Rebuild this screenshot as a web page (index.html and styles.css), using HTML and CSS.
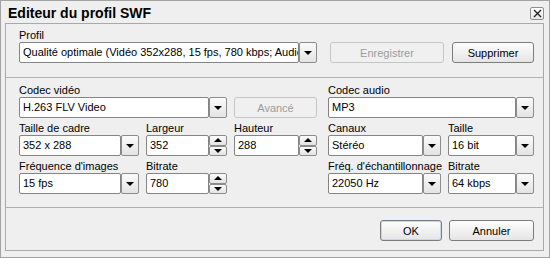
FILE: index.html
```html
<!DOCTYPE html>
<html lang="fr">
<head>
<meta charset="utf-8">
<title>Editeur du profil SWF</title>
<link rel="stylesheet" href="styles.css">
</head>
<body>
<div class="dialog">
  <div class="titlebar">
    <span class="title">Editeur du profil SWF</span>
    <span class="close"><svg width="9" height="9" viewBox="0 0 9 9"><path d="M1 1 L8 8 M8 1 L1 8" stroke="#222" stroke-width="1.4" fill="none"/></svg></span>
  </div>
  <div class="frame">
    <section class="sec sec-profile">
      <div class="field profile-field">
        <div class="lbl">Profil</div>
        <div class="combo">
          <div class="box">Qualité optimale (Vidéo 352x288, 15 fps, 780 kbps; Audio</div>
          <div class="dd"><span class="arrow-down"></span></div>
        </div>
      </div>
      <div class="btn btn-disabled btn-save">Enregistrer</div>
      <div class="btn btn-del">Supprimer</div>
    </section>

    <section class="sec sec-codec">
      <div class="grid grid-left">
        <div class="field span2">
          <div class="lbl">Codec vidéo</div>
          <div class="combo"><div class="box">H.263 FLV Video</div><div class="dd"><span class="arrow-down"></span></div></div>
        </div>
        <div class="field">
          <div class="lbl">&nbsp;</div>
          <div class="btn btn-disabled">Avancé</div>
        </div>
        <div class="field">
          <div class="lbl">Taille de cadre</div>
          <div class="combo"><div class="box">352 x 288</div><div class="dd"><span class="arrow-down"></span></div></div>
        </div>
        <div class="field">
          <div class="lbl">Largeur</div>
          <div class="combo"><div class="box">352</div><div class="spin"><div class="sb"><span class="arrow-up"></span></div><div class="sb"><span class="arrow-down"></span></div></div></div>
        </div>
        <div class="field">
          <div class="lbl">Hauteur</div>
          <div class="combo"><div class="box">288</div><div class="spin"><div class="sb"><span class="arrow-up"></span></div><div class="sb"><span class="arrow-down"></span></div></div></div>
        </div>
        <div class="field">
          <div class="lbl">Fréquence d'images</div>
          <div class="combo"><div class="box">15 fps</div><div class="dd"><span class="arrow-down"></span></div></div>
        </div>
        <div class="field">
          <div class="lbl">Bitrate</div>
          <div class="combo"><div class="box">780</div><div class="spin"><div class="sb"><span class="arrow-up"></span></div><div class="sb"><span class="arrow-down"></span></div></div></div>
        </div>
      </div>

      <div class="grid grid-right">
        <div class="field span2">
          <div class="lbl">Codec audio</div>
          <div class="combo"><div class="box">MP3</div><div class="dd"><span class="arrow-down"></span></div></div>
        </div>
        <div class="field">
          <div class="lbl">Canaux</div>
          <div class="combo"><div class="box">Stéréo</div><div class="dd"><span class="arrow-down"></span></div></div>
        </div>
        <div class="field">
          <div class="lbl">Taille</div>
          <div class="combo"><div class="box">16 bit</div><div class="dd"><span class="arrow-down"></span></div></div>
        </div>
        <div class="field">
          <div class="lbl">Fréq. d'échantillonnage</div>
          <div class="combo"><div class="box">22050 Hz</div><div class="dd"><span class="arrow-down"></span></div></div>
        </div>
        <div class="field">
          <div class="lbl">Bitrate</div>
          <div class="combo"><div class="box">64 kbps</div><div class="dd"><span class="arrow-down"></span></div></div>
        </div>
      </div>
    </section>

    <section class="sec sec-actions">
      <div class="btn btn-ok">OK</div>
      <div class="btn btn-cancel">Annuler</div>
    </section>
  </div>
</div>
</body>
</html>
```

FILE: styles.css
```css
* { box-sizing: border-box; }
html, body { margin: 0; padding: 0; background: #efefef; }
body {
  font-family: "Liberation Sans", Arial, sans-serif;
  font-size: 11px;
  color: #000;
}
.dialog {
  width: 550px;
  height: 258px;
  border: 1px solid #a3a3a3;
  background: #efefef;
  padding: 0 5px 6px 4px;
  display: flex;
  flex-direction: column;
}
.titlebar {
  height: 22px;
  flex: none;
  display: flex;
  align-items: center;
  justify-content: space-between;
  padding: 0 0 0 3px;
}
.title {
  font-weight: bold;
  font-size: 14px;
  margin-top: 1px;
}
.close {
  width: 14px;
  height: 13px;
  border: 1px solid #8e8e8e;
  border-radius: 2px;
  background: linear-gradient(#fdfdfd, #e6e6e6);
  display: flex;
  align-items: center;
  justify-content: center;
  margin-top: 3px;
}
.frame {
  flex: 1;
  border: 1px solid #a9a9a9;
  display: flex;
  flex-direction: column;
}
.sec {
  padding-left: 13px;
  padding-right: 9px;
}
.sec-profile {
  height: 54px;
  border-bottom: 1px solid #b1b1b1;
  padding-top: 5px;
  display: flex;
  align-items: flex-end;
  padding-bottom: 14px;
}
.profile-field { width: 298px; }
.btn-save { width: 114px; margin-left: 13px; }
.btn-del { width: 82px; margin-left: 8px; }

.sec-codec {
  height: 130px;
  border-bottom: 1px solid #b1b1b1;
  padding-top: 6px;
  display: flex;
  gap: 11px;
}
.grid {
  display: grid;
  row-gap: 4px;
  column-gap: 7px;
  align-content: start;
}
.grid-left { grid-template-columns: 120px 81px 83px; width: 298px; }
.grid-right { grid-template-columns: 113px 86px; width: 206px; }
.span2 { grid-column: span 2; }

.sec-actions {
  flex: 1;
  display: flex;
  justify-content: flex-end;
  padding-top: 12px;
  gap: 7px;
}
.btn-ok { width: 62px; border-color: #6c7a96; box-shadow: inset 0 0 0 1px #c9d6ee; }
.btn-cancel { width: 85px; }

.field { display: flex; flex-direction: column; }
.lbl {
  height: 13px;
  line-height: 13px;
  white-space: nowrap;
}
.combo {
  height: 21px;
  display: flex;
}
.box {
  flex: 1;
  min-width: 0;
  border: 1px solid #858585;
  border-radius: 2px;
  background: #fff;
  padding: 0 3px;
  line-height: 19px;
  white-space: nowrap;
  overflow: hidden;
}
.dd {
  width: 18px;
  flex: none;
  border: 1px solid #8c8c8c;
  border-radius: 2px;
  background: linear-gradient(#fbfbfb, #e3e3e3);
  display: flex;
  align-items: center;
  justify-content: center;
}
.spin {
  width: 18px;
  flex: none;
  display: flex;
  flex-direction: column;
}
.sb {
  flex: 1;
  border: 1px solid #8c8c8c;
  border-radius: 2px;
  background: linear-gradient(#fbfbfb, #e3e3e3);
  display: flex;
  align-items: center;
  justify-content: center;
}
.arrow-down {
  width: 0; height: 0;
  border-left: 4px solid transparent;
  border-right: 4px solid transparent;
  border-top: 4px solid #000;
  margin-top: 1px;
}
.arrow-up {
  width: 0; height: 0;
  border-left: 4px solid transparent;
  border-right: 4px solid transparent;
  border-bottom: 4px solid #000;
}
.btn {
  height: 21px;
  border: 1px solid #7d7d7d;
  border-radius: 3px;
  background: linear-gradient(#fdfdfd, #e5e5e5);
  display: flex;
  align-items: center;
  justify-content: center;
  white-space: nowrap;
}
.btn-disabled {
  border-color: #c6c6c6;
  background: #f0f0f0;
  color: #9c9c9c;
}
```
